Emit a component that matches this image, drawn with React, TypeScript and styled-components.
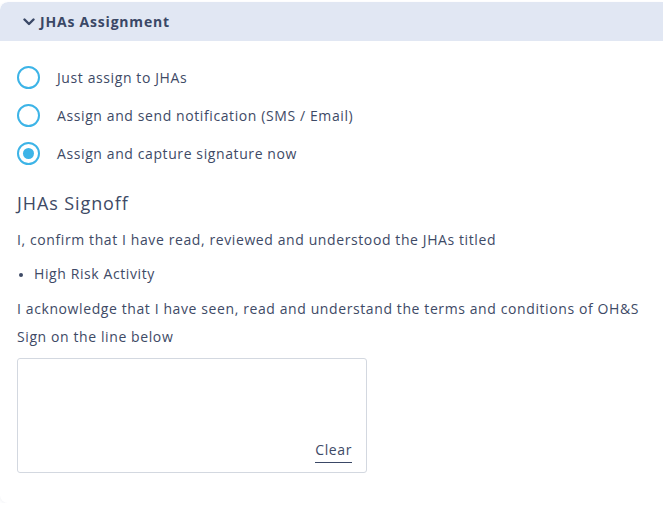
import React, { useState } from "react";
import styled, { createGlobalStyle } from "styled-components";

const GlobalStyle = createGlobalStyle`
  html, body {
    margin: 0;
    padding: 0;
    background: #ffffff;
  }
  body {
    font-family: "Open Sans", "Liberation Sans", sans-serif;
    color: #3e4a66;
    letter-spacing: 0.6px;
  }
`;

const Card = styled.div`
  margin-top: 2px;
  width: 663px;
  height: 501px;
  background: #ffffff;
  border-radius: 8px 0 0 8px;
  box-shadow: -1px 1px 3px rgba(60, 80, 130, 0.06);
  overflow: hidden;
`;

const Header = styled.div`
  display: flex;
  align-items: center;
  gap: 5px;
  height: 39px;
  padding-left: 23px;
  background: #e1e7f3;
  border-radius: 8px 0 0 0;
  font-size: 14px;
  font-weight: 700;
  letter-spacing: 0.8px;
  color: #3a4866;
`;

const Body = styled.div`
  padding: 0 17px;
`;

const RadioList = styled.div`
  display: flex;
  flex-direction: column;
  gap: 15px;
  padding-top: 25px;
`;

const RadioRow = styled.label`
  display: flex;
  align-items: center;
  gap: 17px;
  height: 23px;
  font-size: 14px;
  cursor: pointer;
`;

const RadioCircle = styled.span<{ $checked: boolean }>`
  box-sizing: border-box;
  width: 23px;
  height: 23px;
  border-radius: 50%;
  border: 2px solid #3db4e7;
  display: flex;
  align-items: center;
  justify-content: center;
  &::after {
    content: "";
    width: 11px;
    height: 11px;
    border-radius: 50%;
    background: #3db4e7;
    display: ${(p) => (p.$checked ? "block" : "none")};
  }
`;

const Title = styled.h3`
  margin: 26px 0 0;
  font-size: 18px;
  font-weight: 400;
  line-height: 24px;
  letter-spacing: 0.9px;
`;

const Para = styled.p<{ $gap?: number }>`
  margin: ${(p) => p.$gap ?? 15}px 0 0;
  font-size: 14px;
  line-height: 20px;
`;

const Bullets = styled.ul`
  margin: 14px 0 0;
  padding-left: 17px;
  font-size: 14px;
  line-height: 20px;
  li::marker {
    font-size: 11px;
  }
`;

const SignBox = styled.div`
  box-sizing: border-box;
  margin-top: 11px;
  width: 350px;
  height: 115px;
  border: 1px solid #d3d8e0;
  border-radius: 3px;
  display: flex;
  align-items: flex-end;
  justify-content: flex-end;
  padding: 0 14px 9px 0;
`;

const ClearButton = styled.button`
  background: none;
  border: none;
  border-bottom: 1.5px solid #3a4866;
  padding: 0 0 3px;
  font-family: inherit;
  font-size: 14px;
  letter-spacing: 0.6px;
  color: #3e4a66;
  cursor: pointer;
`;

const options = [
  "Just assign to JHAs",
  "Assign and send notification (SMS / Email)",
  "Assign and capture signature now",
];

export default function App() {
  const [selected, setSelected] = useState(2);
  return (
    <>
      <GlobalStyle />
      <Card>
        <Header>
          <svg width="12" height="12" viewBox="0 0 12 12">
            <path
              d="M1.5 3.5 L6 8 L10.5 3.5"
              fill="none"
              stroke="#3a4866"
              strokeWidth="2.4"
              strokeLinecap="round"
              strokeLinejoin="round"
            />
          </svg>
          JHAs Assignment
        </Header>
        <Body>
          <RadioList>
            {options.map((o, i) => (
              <RadioRow key={o} onClick={() => setSelected(i)}>
                <RadioCircle $checked={selected === i} />
                {o}
              </RadioRow>
            ))}
          </RadioList>
          <Title>JHAs Signoff</Title>
          <Para>I, confirm that I have read, reviewed and understood the JHAs titled</Para>
          <Bullets>
            <li>High Risk Activity</li>
          </Bullets>
          <Para $gap={15}>
            I acknowledge that I have seen, read and understand the terms and
            conditions of OH&amp;S
          </Para>
          <Para $gap={8}>Sign on the line below</Para>
          <SignBox>
            <ClearButton>Clear</ClearButton>
          </SignBox>
        </Body>
      </Card>
    </>
  );
}
